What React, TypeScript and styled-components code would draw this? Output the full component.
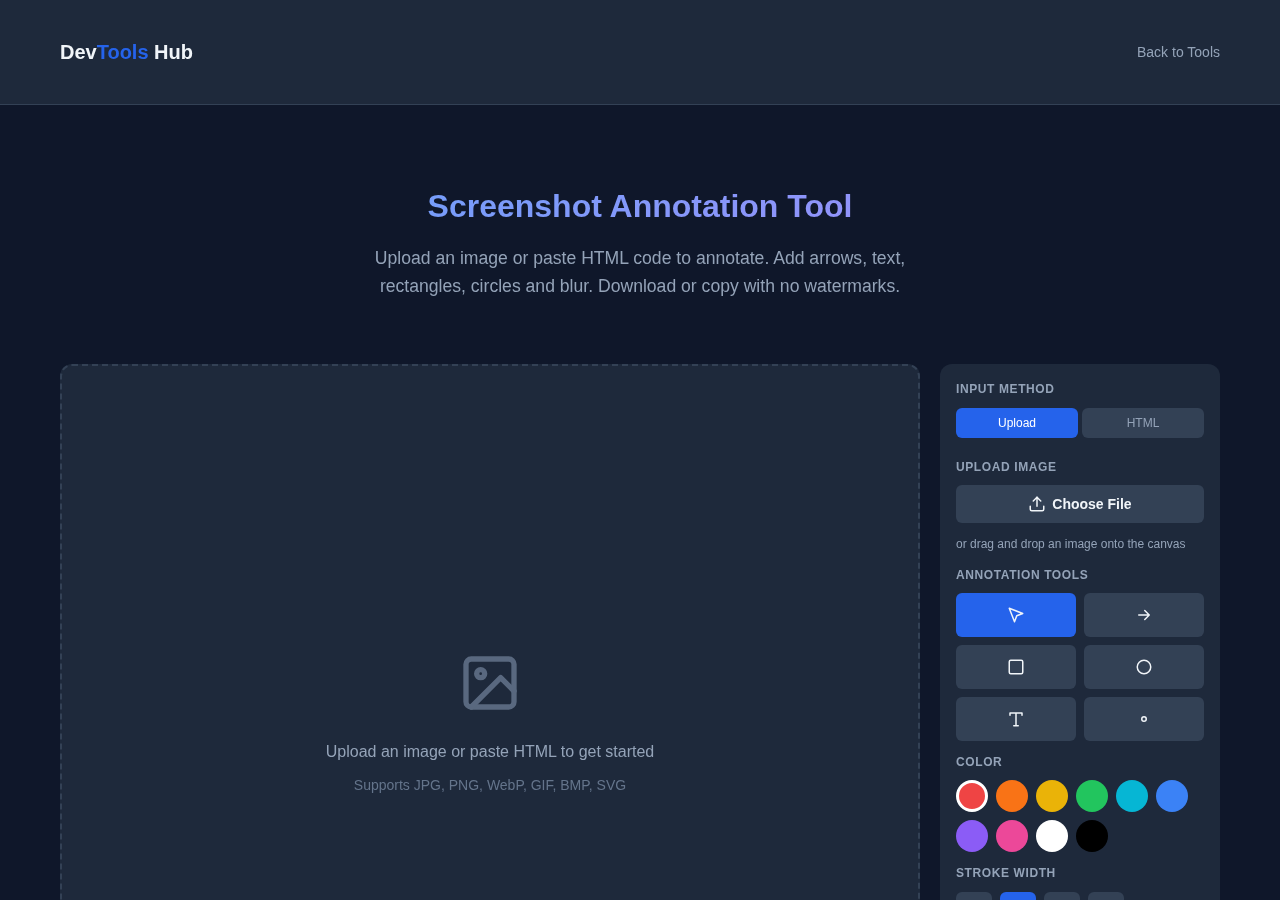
import React from "react";
import styled, { createGlobalStyle } from "styled-components";
import { Upload } from "lucide-react";

const Global = createGlobalStyle`
  * { box-sizing: border-box; }
  html, body { margin: 0; padding: 0; }
  body {
    background: #0f172a;
    color: #e2e8f0;
    font-family: "Liberation Sans", Arial, sans-serif;
  }
  #root { will-change: transform; }
`;

const Header = styled.header`
  height: 105px;
  padding: 0 60px;
  background: #1e293b;
  border-bottom: 1px solid #334155;
  display: flex;
  align-items: center;
  justify-content: space-between;
`;
const Logo = styled.div`
  font-size: 20px;
  font-weight: 700;
  color: #f1f5f9;
  span { color: #2563eb; }
`;
const BackLink = styled.a`
  font-size: 14px;
  color: #94a3b8;
`;
const Hero = styled.section`
  padding: 79px 60px 0;
  height: 259px;
  text-align: center;
`;
const Title = styled.h1`
  margin: 0 0 16px;
  font-size: 32px;
  line-height: 44px;
  font-weight: 700;
  background: linear-gradient(135deg, #60a5fa, #a78bfa);
  -webkit-background-clip: text;
  background-clip: text;
  color: transparent;
`;
const Subtitle = styled.p`
  margin: 0 auto;
  max-width: 600px;
  font-size: 17.6px;
  line-height: 28.16px;
  color: #94a3b8;
`;
const Main = styled.main`
  padding: 0 60px 60px;
  display: grid;
  grid-template-columns: 860px 280px;
  gap: 20px;
  align-items: start;
`;
const Canvas = styled.div`
  height: 719px;
  border: 2px dashed #334155;
  border-radius: 12px;
  background: #1e293b;
  display: flex;
  flex-direction: column;
  align-items: center;
  justify-content: center;
`;
const CanvasIcon = styled.svg`
  display: block;
  margin-bottom: 24px;
  color: #64748b;
  opacity: 0.85;
`;
const CanvasTitle = styled.p`
  margin: 0 0 9px;
  font-size: 16px;
  line-height: 26px;
  color: #94a3b8;
`;
const CanvasNote = styled.p`
  margin: 0;
  font-size: 14px;
  line-height: 22px;
  color: #64748b;
`;
const Panel = styled.aside`
  padding: 16px;
  background: #1e293b;
  border-radius: 12px;
`;
const Section = styled.div<{ $gap?: number }>`
  margin-bottom: ${(p) => p.$gap ?? 12}px;
`;
const Label = styled.h3<{ $gap?: number }>`
  margin: 0 0 ${(p) => p.$gap ?? 9}px;
  font-size: 12px;
  line-height: 18px;
  font-weight: 700;
  letter-spacing: 0.6px;
  text-transform: uppercase;
  color: #94a3b8;
`;
const Tabs = styled.div`
  display: grid;
  grid-template-columns: 1fr 1fr;
  gap: 4px;
`;
const Tab = styled.button<{ $active?: boolean }>`
  height: 30px;
  padding: 0;
  border: 0;
  border-radius: 6px;
  font: 12px "Liberation Sans", Arial, sans-serif;
  background: ${(p) => (p.$active ? "#2563eb" : "#334155")};
  color: ${(p) => (p.$active ? "#ffffff" : "#94a3b8")};
`;
const FileButton = styled.button`
  width: 100%;
  height: 38px;
  border: 0;
  border-radius: 6px;
  background: #334155;
  color: #f1f5f9;
  font: 700 14px "Liberation Sans", Arial, sans-serif;
  display: flex;
  align-items: center;
  justify-content: center;
  gap: 6px;
`;
const Hint = styled.p`
  margin: 12px 0 0;
  font-size: 12px;
  line-height: 19px;
  color: #94a3b8;
`;
const ToolGrid = styled.div`
  display: grid;
  grid-template-columns: 1fr 1fr;
  gap: 8px;
`;
const ToolButton = styled.button<{ $active?: boolean }>`
  height: 44px;
  padding: 0;
  border: 0;
  border-radius: 6px;
  background: ${(p) => (p.$active ? "#2563eb" : "#334155")};
  color: #f1f5f9;
  display: flex;
  align-items: center;
  justify-content: center;
`;
const Swatches = styled.div`
  display: flex;
  flex-wrap: wrap;
  gap: 8px;
`;
const Swatch = styled.button<{ $color: string; $active?: boolean }>`
  width: 32px;
  height: 32px;
  padding: 0;
  border-radius: 50%;
  border: ${(p) => (p.$active ? "3px solid #ffffff" : "0")};
  background: ${(p) => p.$color};
`;
const StrokeRow = styled.div`
  display: flex;
  gap: 8px;
`;
const StrokeButton = styled.button<{ $active?: boolean }>`
  width: 36px;
  height: 36px;
  padding: 0;
  border: 0;
  border-radius: 6px;
  background: ${(p) => (p.$active ? "#2563eb" : "#334155")};
`;

const Glyph = ({ children }: { children: React.ReactNode }) => (
  <svg width="18" height="18" viewBox="0 0 24 24" fill="none" stroke="currentColor" strokeWidth="2" strokeLinecap="round" strokeLinejoin="round">
    {children}
  </svg>
);

const colors = ["#ef4444", "#f97316", "#eab308", "#22c55e", "#06b6d4", "#3b82f6", "#8b5cf6", "#ec4899", "#ffffff", "#000000"];

export default function App() {
  return (
    <>
      <Global />
      <Header>
        <Logo>Dev<span>Tools</span> Hub</Logo>
        <BackLink>Back to Tools</BackLink>
      </Header>
      <Hero>
        <Title>Screenshot Annotation Tool</Title>
        <Subtitle>
          Upload an image or paste HTML code to annotate. Add arrows, text, rectangles, circles and blur. Download or copy with no watermarks.
        </Subtitle>
      </Hero>
      <Main>
        <Canvas>
          <CanvasIcon width="64" height="64" viewBox="0 0 24 24" fill="none" stroke="currentColor" strokeWidth="2" strokeLinecap="round" strokeLinejoin="round">
            <rect x="3" y="3" width="18" height="18" rx="2" />
            <circle cx="8.5" cy="8.5" r="1.5" />
            <path d="M21 15l-5-5L5 21" />
          </CanvasIcon>
          <CanvasTitle>Upload an image or paste HTML to get started</CanvasTitle>
          <CanvasNote>Supports JPG, PNG, WebP, GIF, BMP, SVG</CanvasNote>
        </Canvas>
        <Panel>
          <Section $gap={20}>
            <Label $gap={10}>Input Method</Label>
            <Tabs>
              <Tab $active>Upload</Tab>
              <Tab>HTML</Tab>
            </Tabs>
          </Section>
          <Section>
            <Label>Upload Image</Label>
            <FileButton><Upload size={18} />Choose File</FileButton>
            <Hint>or drag and drop an image onto the canvas</Hint>
          </Section>
          <Section>
            <Label>Annotation Tools</Label>
            <ToolGrid>
              <ToolButton $active aria-label="Select"><Glyph><path d="M3 3l7 18 3-8 8-3z" /></Glyph></ToolButton>
              <ToolButton aria-label="Arrow"><Glyph><path d="M5 12h14M13 6l6 6-6 6" /></Glyph></ToolButton>
              <ToolButton aria-label="Rectangle"><Glyph><rect x="3" y="3" width="18" height="18" rx="2" /></Glyph></ToolButton>
              <ToolButton aria-label="Circle"><Glyph><circle cx="12" cy="12" r="9" /></Glyph></ToolButton>
              <ToolButton aria-label="Text"><Glyph><path d="M4 7V4h16v3M9 21h6M12 4v17" /></Glyph></ToolButton>
              <ToolButton aria-label="Blur"><Glyph><circle cx="12" cy="12" r="3" /></Glyph></ToolButton>
            </ToolGrid>
          </Section>
          <Section>
            <Label>Color</Label>
            <Swatches>
              {colors.map((c, i) => (
                <Swatch key={c} $color={c} $active={i === 0} />
              ))}
            </Swatches>
          </Section>
          <Section>
            <Label $gap={10}>Stroke Width</Label>
            <StrokeRow>
              <StrokeButton />
              <StrokeButton $active />
              <StrokeButton />
              <StrokeButton />
            </StrokeRow>
          </Section>
        </Panel>
      </Main>
    </>
  );
}
